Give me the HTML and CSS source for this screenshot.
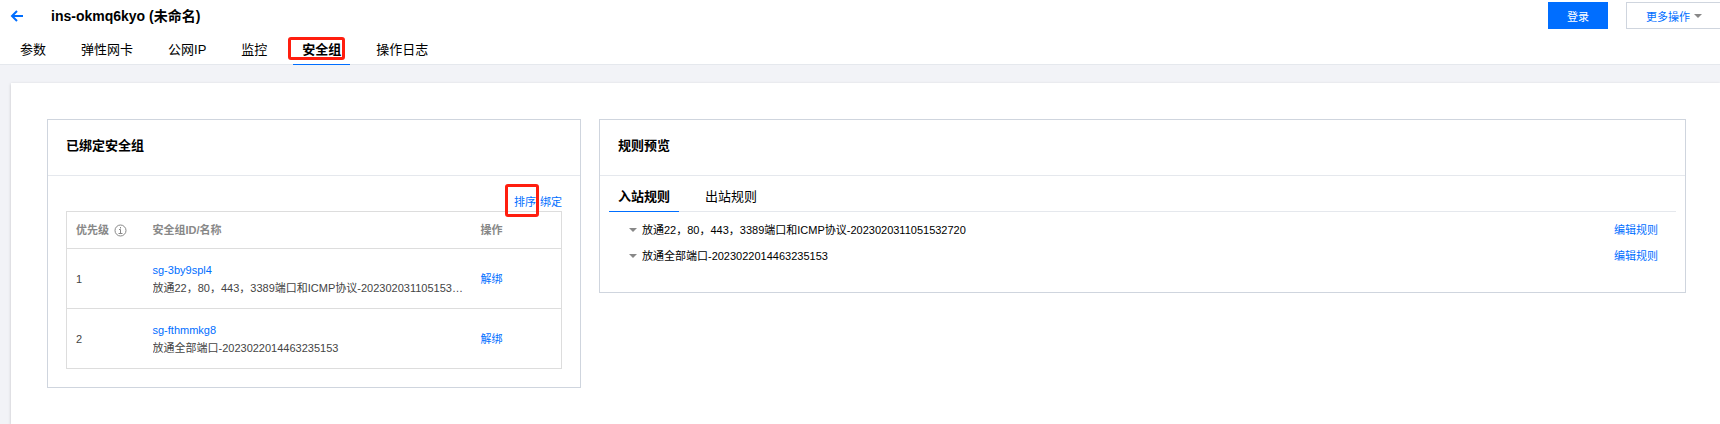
FILE: index.html
```html
<!DOCTYPE html>
<html lang="zh-CN">
<head>
    <meta charset="utf-8">
    <title>ins-okmq6kyo</title>
    <link rel="stylesheet" href="styles.css">
</head>
<body>
    <header class="header">
        <div class="header-top">
            <a class="back" href="#" aria-label="返回">
                <svg width="14" height="12" viewBox="0 0 14 12" fill="none" stroke="#006eff" stroke-width="2">
                    <path d="M7 1L2 6l5 5M2 6h11"/>
                </svg>
            </a>
            <h1 class="title">ins-okmq6kyo (未命名)</h1>
            <button class="btn btn-primary">登录</button>
            <button class="btn btn-more">更多操作<span class="caret"></span></button>
        </div>
        <nav class="tabs">
            <a class="tab" href="#">参数</a>
            <a class="tab" href="#">弹性网卡</a>
            <a class="tab" href="#">公网IP</a>
            <a class="tab" href="#">监控</a>
            <a class="tab active" href="#">安全组<span class="mark mark-tab"></span></a>
            <a class="tab" href="#">操作日志</a>
        </nav>
    </header>

    <main class="content">
        <section class="panel">
            <h2 class="panel-title">已绑定安全组</h2>
            <div class="bound">
                <div class="actions">
                    <a class="link sort" href="#">排序<span class="mark mark-sort"></span></a>
                    <a class="link" href="#">绑定</a>
                </div>
                <table class="table">
                    <thead>
                        <tr>
                            <th class="col-priority">
                                <span class="with-icon">优先级
                                    <svg width="13" height="13" viewBox="0 0 13 13" fill="none" stroke="#888">
                                        <circle cx="6.5" cy="6.5" r="5.5"/>
                                        <path d="M6.5 3v1.5M5 5.5h1.5v4M4.5 9.5h4"/>
                                    </svg>
                                </span>
                            </th>
                            <th>安全组ID/名称</th>
                            <th class="col-action">操作</th>
                        </tr>
                    </thead>
                    <tbody>
                        <tr>
                            <td>1</td>
                            <td class="group">
                                <a class="link" href="#">sg-3by9spl4</a>
                                <div class="name">放通22，80，443，3389端口和ICMP协议-2023020311051532720</div>
                            </td>
                            <td><a class="link" href="#">解绑</a></td>
                        </tr>
                        <tr>
                            <td>2</td>
                            <td class="group">
                                <a class="link" href="#">sg-fthmmkg8</a>
                                <div class="name">放通全部端口-2023022014463235153</div>
                            </td>
                            <td><a class="link" href="#">解绑</a></td>
                        </tr>
                    </tbody>
                </table>
            </div>
        </section>

        <section class="panel">
            <h2 class="panel-title">规则预览</h2>
            <div class="preview">
                <nav class="tabs rule-tabs">
                    <a class="tab active" href="#">入站规则</a>
                    <a class="tab" href="#">出站规则</a>
                </nav>
                <ul class="rules">
                    <li class="rule">
                        <span class="caret"></span>
                        <span class="rule-name">放通22，80，443，3389端口和ICMP协议-2023020311051532720</span>
                        <a class="link" href="#">编辑规则</a>
                    </li>
                    <li class="rule">
                        <span class="caret"></span>
                        <span class="rule-name">放通全部端口-2023022014463235153</span>
                        <a class="link" href="#">编辑规则</a>
                    </li>
                </ul>
            </div>
        </section>
    </main>
</body>
</html>
```
FILE: styles.css
```css
* {
    box-sizing: border-box;
}

body {
    display: flex;
    flex-direction: column;
    min-height: 100vh;
    margin: 0;
    font-family: "Liberation Sans", "Noto Sans CJK SC", sans-serif;
    font-size: 11px;
    line-height: 18px;
    color: #444;
    background-color: #f2f3f7;
}

a {
    color: inherit;
    text-decoration: none;
}

.link {
    color: #006eff;
}

.header {
    background-color: #fff;
}

.header-top {
    display: flex;
    align-items: center;
    padding: 2px 0 0 10px;
}

.back {
    display: flex;
}

.title {
    flex: 1;
    margin: 0 0 0 27px;
    font-size: 14px;
    color: #000;
}

.btn {
    height: 27px;
    padding: 0 19px;
    font-family: inherit;
    font-size: 11px;
    cursor: pointer;
}

.btn-primary {
    margin-right: 18px;
    color: #fff;
    background-color: #006eff;
    border: none;
}

.btn-more {
    display: flex;
    align-items: center;
    gap: 4px;
    padding-right: 18px;
    color: #006eff;
    background-color: #fff;
    border: 1px solid #cfd5de;
    border-right: none;
}

.caret {
    border: 4px solid transparent;
    border-top-color: #888;
    border-bottom: none;
}

.tabs {
    display: flex;
    gap: 17px;
    padding: 0 11px;
    border-bottom: 1px solid #e5e8ed;
    font-size: 13px;
}

.tab {
    position: relative;
    padding: 10px 9px 3px;
    margin-bottom: -1px;
    line-height: 22px;
    color: #000;
    border-bottom: 1px solid transparent;
}

.tab.active {
    font-weight: bold;
    border-bottom-color: #006eff;
}

/* red frames around the highlighted controls */
.mark {
    position: absolute;
    border: 3px solid #ff1e0f;
    border-radius: 3px;
}

.mark-tab {
    top: 8px;
    right: 5px;
    bottom: 4px;
    left: -5px;
}

.mark-sort {
    top: -9px;
    right: -3px;
    bottom: -6px;
    left: -9px;
}

.content {
    flex: 1;
    display: grid;
    grid-template-columns: 28fr 57fr;
    gap: 18px;
    align-items: start;
    margin: 18px 0 0 11px;
    padding: 36px 34px 36px 36px;
    background-color: #fff;
    box-shadow: 0 1px 3px rgba(0, 0, 0, 0.2);
}

.panel {
    min-width: 0;
    border: 1px solid #cfd5de;
}

.panel-title {
    margin: 0;
    padding: 16px 18px 20px;
    font-size: 13px;
    line-height: 19px;
    color: #000;
    border-bottom: 1px solid #e5e8ed;
}

.bound {
    padding: 17px 18px 18px;
}

.actions {
    display: flex;
    justify-content: flex-end;
    gap: 4px;
}

.sort {
    position: relative;
}

.table {
    width: 100%;
    table-layout: fixed;
    border-collapse: collapse;
    border: 1px solid #ddd;
}

.table th,
.table td {
    padding: 12px 9px 11px;
    text-align: left;
    border-bottom: 1px solid #ddd;
}

.table th {
    padding: 9px;
    color: #888;
}

.table .group {
    padding-right: 5px;
}

.col-priority {
    width: 77px;
}

.col-action {
    width: 90px;
}

.with-icon {
    display: flex;
    align-items: center;
    gap: 5px;
}

.name {
    overflow: hidden;
    white-space: nowrap;
    text-overflow: ellipsis;
}

.preview {
    padding: 0 9px 23px;
}

.rule-tabs {
    padding: 0;
}

.rules {
    margin: 0;
    padding: 5px 18px 0 20px;
    list-style: none;
}

.rule {
    display: flex;
    align-items: center;
    gap: 5px;
    line-height: 26px;
    color: #000;
}

.rule-name {
    flex: 1;
}
```
